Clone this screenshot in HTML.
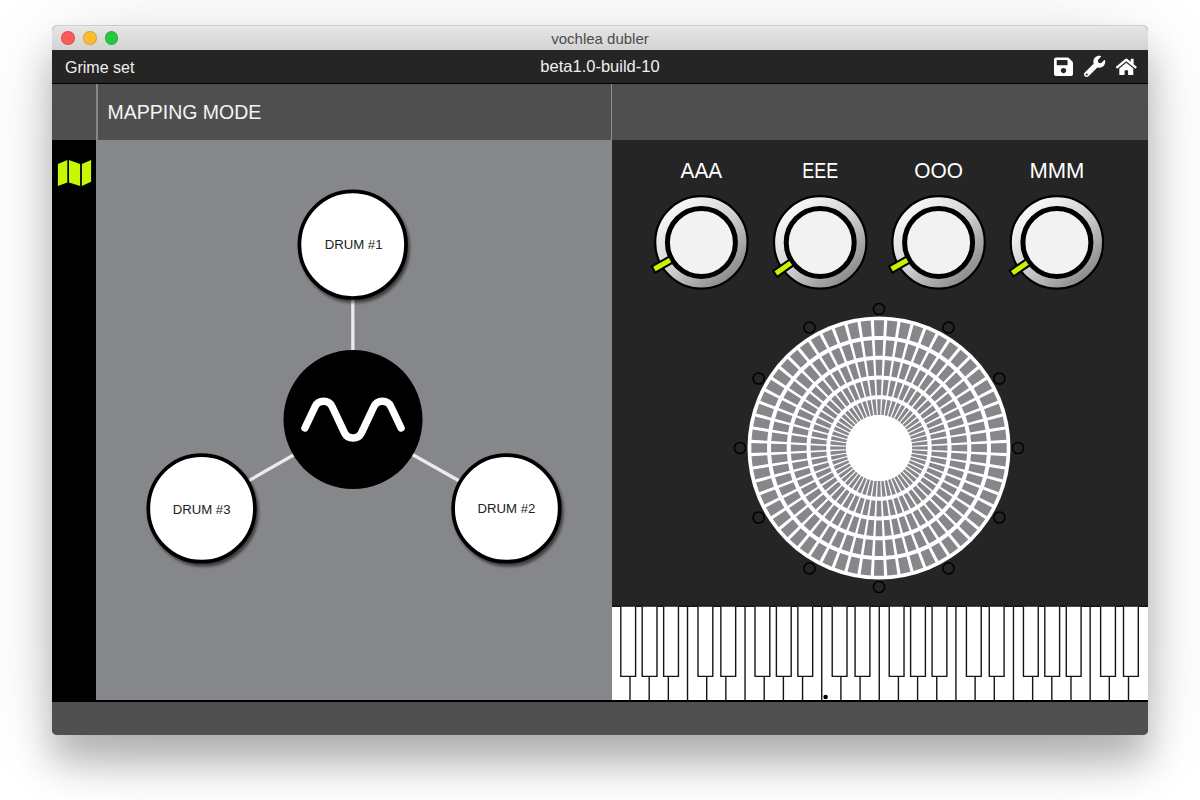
<!DOCTYPE html>
<html><head><meta charset="utf-8">
<style>
html,body{margin:0;padding:0;width:1200px;height:800px;overflow:hidden;background:#fff;font-family:"Liberation Sans",sans-serif;}
.abs{position:absolute;}
#win{position:absolute;left:52px;top:26px;width:1096px;height:709px;border-radius:5px;box-shadow:0 12px 80px -10px rgba(0,0,0,0.18),0 28px 36px rgba(0,0,0,0.24);background:#505050;}
#title{position:absolute;left:52px;top:26px;width:1096px;height:24px;border-radius:5px 5px 0 0;background:linear-gradient(#ececec,#e4e4e4 10%,#d3d3d3);box-shadow:0 -1px 0 rgba(0,0,0,0.16);}
#title span{position:absolute;left:0;right:0;top:4.1px;text-align:center;font-size:15px;color:#4c4c4c;}
.tl{position:absolute;top:31.4px;width:13.4px;height:13.4px;border-radius:50%;box-sizing:border-box;border:0.6px solid rgba(0,0,0,0.12);}
#tb{position:absolute;left:52px;top:50px;width:1096px;height:33px;background:#252525;border-bottom:1px solid #000;}
#tb .t1{position:absolute;left:13px;top:8.5px;font-size:16px;color:#f0f0f0;}
#tb .t2{position:absolute;left:0;right:0;top:6.8px;text-align:center;font-size:16.5px;color:#f0f0f0;}
#hdr{position:absolute;left:52px;top:84px;width:1096px;height:56px;background:#4f4f4f;}
#side{position:absolute;left:52px;top:140px;width:44px;height:560px;background:#000;}
#lp{position:absolute;left:96px;top:140px;width:516px;height:560px;background:#86878b;}
#rp{position:absolute;left:612px;top:140px;width:536px;height:560px;background:#252525;}
#bb{position:absolute;left:52px;top:700px;width:1096px;height:35px;background:#505050;border-top:2px solid #000;box-sizing:border-box;border-radius:0 0 5px 5px;}
.vd{position:absolute;width:1.8px;background:#86878b;}
#mm{position:absolute;left:107.5px;top:101.1px;font-size:19.5px;color:#f4f4f4;}
svg{position:absolute;left:0;top:0;}
.kl{font-family:"Liberation Sans",sans-serif;font-size:22px;fill:#fff;}
.dt{font-family:"Liberation Sans",sans-serif;font-size:13.2px;fill:#222;}
</style></head><body>
<div id="win"></div>
<div id="title"><span>vochlea dubler</span></div>
<div class="tl" style="left:61.4px;background:#fd5b57;"></div>
<div class="tl" style="left:83.2px;background:#fdbb2e;"></div>
<div class="tl" style="left:105px;background:#28c840;"></div>
<div id="tb"><div class="t1">Grime set</div><div class="t2">beta1.0-build-10</div></div>
<div id="hdr"></div>
<div class="vd" style="left:95.9px;top:84px;height:56px;"></div>
<div class="vd" style="left:611px;width:1px;top:84px;height:56px;background:#8e8e8e;"></div>
<div id="side"></div>
<div id="lp"></div>
<div id="rp"></div>
<div id="bb"></div>
<div id="mm">MAPPING MODE</div>
<svg width="1200" height="800" viewBox="0 0 1200 800">
<defs>
<linearGradient id="kg" x1="0.15" y1="0.1" x2="0.85" y2="0.9">
<stop offset="0" stop-color="#fbfbfb"/><stop offset="0.5" stop-color="#d0d0d2"/><stop offset="1" stop-color="#87878a"/>
</linearGradient>
<filter id="sh" x="-20%" y="-20%" width="150%" height="150%"><feGaussianBlur in="SourceAlpha" stdDeviation="1.6"/><feOffset dx="2" dy="2.5"/><feComponentTransfer><feFuncA type="linear" slope="0.55"/></feComponentTransfer><feMerge><feMergeNode/><feMergeNode in="SourceGraphic"/></feMerge></filter>
</defs>
<!-- map icon -->
<g fill="#c8f800">
<path d="M57.9,164 L67.3,160 L67.3,182.5 L57.9,186 Z"/>
<path d="M69,160 L80.1,164 L80.1,186 L69,182.5 Z"/>
<path d="M81.9,164 L91.1,160 L91.1,181.8 L81.9,186 Z"/>
</g>
<!-- toolbar icons -->
<g fill="#fff">
<path transform="translate(1054,56.1) scale(0.0424,0.0412)" d="M433.941 129.941l-83.882-83.882A48 48 0 0 0 316.118 32H48C21.49 32 0 53.49 0 80v352c0 26.51 21.49 48 48 48h352c26.51 0 48-21.49 48-48V163.882a48 48 0 0 0-14.059-33.941zM224 416c-35.346 0-64-28.654-64-64 0-35.346 28.654-64 64-64s64 28.654 64 64c0 35.346-28.654 64-64 64zm96-304.52V212c0 6.627-5.373 12-12 12H76c-6.627 0-12-5.373-12-12V108c0-6.627 5.373-12 12-12h228.52c3.183 0 6.235 1.264 8.485 3.515l3.48 3.48A11.996 11.996 0 0 1 320 111.48z" transform-origin="0 0"/>
<path transform="translate(1084,55.8) scale(0.0415)" d="M507.73 109.1c-2.24-9.03-13.54-12.09-20.12-5.51l-74.36 74.36-67.88-11.310-11.31-67.88 74.36-74.36c6.62-6.62 3.43-17.9-5.66-20.16-47.38-11.74-99.55.91-136.58 37.93-39.64 39.64-50.55 97.1-34.05 147.2L18.74 402.76c-24.99 24.99-24.99 65.51 0 90.5 24.99 24.99 65.51 24.99 90.5 0l213.21-213.21c50.12 16.71 107.47 5.68 147.37-34.22 37.07-37.07 49.7-89.32 37.91-136.73zM64 472c-13.25 0-24-10.75-24-24 0-13.26 10.75-24 24-24s24 10.74 24 24c0 13.25-10.75 24-24 24z"/>
<path transform="translate(1115.8,57.5) scale(0.0365)" d="M280.37 148.26L96 300.11V464a16 16 0 0 0 16 16l112.06-.29a16 16 0 0 0 15.92-16V368a16 16 0 0 1 16-16h64a16 16 0 0 1 16 16v95.64a16 16 0 0 0 16 16.05L464 480a16 16 0 0 0 16-16V300L295.67 148.26a12.19 12.19 0 0 0-15.3 0zM571.6 251.47L488 182.56V44.05a12 12 0 0 0-12-12h-56a12 12 0 0 0-12 12v72.61L318.47 43a48 48 0 0 0-61 0L4.340 251.47a12 12 0 0 0-1.6 16.9l25.5 31A12 12 0 0 0 45.15 301l235.22-193.74a12.19 12.19 0 0 1 15.3 0L530.9 301a12 12 0 0 0 16.9-1.6l25.5-31a12 12 0 0 0-1.7-16.93z"/>
</g>
<!-- drums -->
<g stroke="#ebebeb" stroke-width="3.3">
<line x1="353" y1="421" x2="352.7" y2="244.7"/>
<line x1="353" y1="421" x2="506.4" y2="507.5"/>
<line x1="353" y1="421" x2="201.6" y2="507.7"/>
</g>
<circle cx="353" cy="419.5" r="69.5" fill="#000"/>
<path d="M304.95,428.00 L315.01,406.74 A9.5,9.5 0 0 1 332.19,406.74 L344.41,432.56 A9.5,9.5 0 0 0 361.59,432.56 L373.81,406.74 A9.5,9.5 0 0 1 390.99,406.74 L401.05,428.00" fill="none" stroke="#fff" stroke-width="7.4" stroke-linecap="round" stroke-linejoin="round"/>
<g filter="url(#sh)">
<circle cx="352.7" cy="244.7" r="53.3" fill="#fff" stroke="#000" stroke-width="3.7"/>
<circle cx="506.4" cy="508.4" r="53.3" fill="#fff" stroke="#000" stroke-width="3.7"/>
<circle cx="201.6" cy="508.4" r="53.3" fill="#fff" stroke="#000" stroke-width="3.7"/>
</g>
<text class="dt" x="353.6" y="249.2" text-anchor="middle">DRUM #1</text>
<text class="dt" x="506.4" y="513.3" text-anchor="middle">DRUM #2</text>
<text class="dt" x="201.6" y="513.5" text-anchor="middle">DRUM #3</text>
<!-- knobs -->
<g>
<circle cx="701.4" cy="242.4" r="46.2" fill="url(#kg)" stroke="#000" stroke-width="2.2"/>
<circle cx="701.4" cy="242.4" r="34" fill="#f2f2f2" stroke="#000" stroke-width="5"/>
<line x1="670.94" y1="259.63" x2="652.66" y2="269.98" stroke="#000" stroke-width="9"/>
<line x1="670.07" y1="260.13" x2="654.4" y2="268.99" stroke="#c8f400" stroke-width="5"/>
</g>
<text transform="translate(701.4,177.8) scale(0.946,1)" x="0" y="0" text-anchor="middle" class="kl">AAA</text>
<g>
<circle cx="820.2" cy="242.4" r="46.2" fill="url(#kg)" stroke="#000" stroke-width="2.2"/>
<circle cx="820.2" cy="242.4" r="34" fill="#f2f2f2" stroke="#000" stroke-width="5"/>
<line x1="791.53" y1="262.48" x2="774.33" y2="274.52" stroke="#000" stroke-width="9"/>
<line x1="790.71" y1="263.05" x2="775.97" y2="273.37" stroke="#c8f400" stroke-width="5"/>
</g>
<text transform="translate(820.2,177.8) scale(0.815,1)" x="0" y="0" text-anchor="middle" class="kl">EEE</text>
<g>
<circle cx="938.6" cy="242.4" r="46.2" fill="url(#kg)" stroke="#000" stroke-width="2.2"/>
<circle cx="938.6" cy="242.4" r="34" fill="#f2f2f2" stroke="#000" stroke-width="5"/>
<line x1="908.14" y1="259.63" x2="889.86" y2="269.98" stroke="#000" stroke-width="9"/>
<line x1="907.27" y1="260.13" x2="891.6" y2="268.99" stroke="#c8f400" stroke-width="5"/>
</g>
<text transform="translate(938.6,177.8) scale(0.95,1)" x="0" y="0" text-anchor="middle" class="kl">OOO</text>
<g>
<circle cx="1056.9" cy="242.4" r="46.2" fill="url(#kg)" stroke="#000" stroke-width="2.2"/>
<circle cx="1056.9" cy="242.4" r="34" fill="#f2f2f2" stroke="#000" stroke-width="5"/>
<line x1="1028.06" y1="262.22" x2="1010.75" y2="274.12" stroke="#000" stroke-width="9"/>
<line x1="1027.23" y1="262.79" x2="1012.4" y2="272.99" stroke="#c8f400" stroke-width="5"/>
</g>
<text transform="translate(1056.9,177.8) scale(1.0,1)" x="0" y="0" text-anchor="middle" class="kl">MMM</text>
<!-- disc -->
<circle cx="879" cy="448" r="131.5" fill="#fff"/>
<path fill="#86878b" d="M877.8,415.02 L877.15,399.28 L880.85,399.28 L880.2,415.02ZM881.25,415.08 L882.26,399.36 L885.93,399.74 L883.64,415.33ZM884.68,415.49 L887.32,399.97 L890.93,400.73 L887.03,415.99ZM888.05,416.26 L892.3,401.1 L895.81,402.24 L890.33,417.01ZM891.32,417.38 L897.13,402.75 L900.5,404.25 L893.51,418.36ZM894.45,418.84 L901.76,404.89 L904.96,406.73 L896.53,420.04ZM897.41,420.61 L906.14,407.5 L909.13,409.67 L899.36,422.03ZM900.17,422.69 L910.22,410.56 L912.97,413.03 L901.96,424.3ZM902.7,425.04 L913.97,414.03 L916.44,416.78 L904.31,426.83ZM904.97,427.64 L917.33,417.87 L919.5,420.86 L906.39,429.59ZM906.96,430.47 L920.27,422.04 L922.11,425.24 L908.16,432.55ZM908.64,433.49 L922.75,426.5 L924.25,429.87 L909.62,435.68ZM909.99,436.67 L924.76,431.19 L925.9,434.7 L910.74,438.95ZM911.01,439.97 L926.27,436.07 L927.03,439.68 L911.51,442.32ZM911.67,443.36 L927.26,441.07 L927.64,444.74 L911.92,445.75ZM911.98,446.8 L927.72,446.15 L927.72,449.85 L911.98,449.2ZM911.92,450.25 L927.64,451.26 L927.26,454.93 L911.67,452.64ZM911.51,453.68 L927.03,456.32 L926.27,459.93 L911.01,456.03ZM910.74,457.05 L925.9,461.3 L924.76,464.81 L909.99,459.33ZM909.62,460.32 L924.25,466.13 L922.75,469.5 L908.64,462.51ZM908.16,463.45 L922.11,470.76 L920.27,473.96 L906.96,465.53ZM906.39,466.41 L919.5,475.14 L917.33,478.13 L904.97,468.36ZM904.31,469.17 L916.44,479.22 L913.97,481.97 L902.7,470.96ZM901.96,471.7 L912.97,482.97 L910.22,485.44 L900.17,473.31ZM899.36,473.97 L909.13,486.33 L906.14,488.5 L897.41,475.39ZM896.53,475.96 L904.96,489.27 L901.76,491.11 L894.45,477.16ZM893.51,477.64 L900.5,491.75 L897.13,493.25 L891.32,478.62ZM890.33,478.99 L895.81,493.76 L892.3,494.9 L888.05,479.74ZM887.03,480.01 L890.93,495.27 L887.32,496.03 L884.68,480.51ZM883.64,480.67 L885.93,496.26 L882.26,496.64 L881.25,480.92ZM880.2,480.98 L880.85,496.72 L877.15,496.72 L877.8,480.98ZM876.75,480.92 L875.74,496.64 L872.07,496.26 L874.36,480.67ZM873.32,480.51 L870.68,496.03 L867.07,495.27 L870.97,480.01ZM869.95,479.74 L865.7,494.9 L862.19,493.76 L867.67,478.99ZM866.68,478.62 L860.87,493.25 L857.5,491.75 L864.49,477.64ZM863.55,477.16 L856.24,491.11 L853.04,489.27 L861.47,475.96ZM860.59,475.39 L851.86,488.5 L848.87,486.33 L858.64,473.97ZM857.83,473.31 L847.78,485.44 L845.03,482.97 L856.04,471.7ZM855.3,470.96 L844.03,481.97 L841.56,479.22 L853.69,469.17ZM853.03,468.36 L840.67,478.13 L838.5,475.14 L851.61,466.41ZM851.04,465.53 L837.73,473.96 L835.89,470.76 L849.84,463.45ZM849.36,462.51 L835.25,469.5 L833.75,466.13 L848.38,460.32ZM848.01,459.33 L833.24,464.81 L832.1,461.3 L847.26,457.05ZM846.99,456.03 L831.73,459.93 L830.97,456.32 L846.49,453.68ZM846.33,452.64 L830.74,454.93 L830.36,451.26 L846.08,450.25ZM846.02,449.2 L830.28,449.85 L830.28,446.15 L846.02,446.8ZM846.08,445.75 L830.36,444.74 L830.74,441.07 L846.33,443.36ZM846.49,442.32 L830.97,439.68 L831.73,436.07 L846.99,439.97ZM847.26,438.95 L832.1,434.7 L833.24,431.19 L848.01,436.67ZM848.38,435.68 L833.75,429.87 L835.25,426.5 L849.36,433.49ZM849.84,432.55 L835.89,425.24 L837.73,422.04 L851.04,430.47ZM851.61,429.59 L838.5,420.86 L840.67,417.87 L853.03,427.64ZM853.69,426.83 L841.56,416.78 L844.03,414.03 L855.3,425.04ZM856.04,424.3 L845.03,413.03 L847.78,410.56 L857.83,422.69ZM858.64,422.03 L848.87,409.67 L851.86,407.5 L860.59,420.61ZM861.47,420.04 L853.04,406.73 L856.24,404.89 L863.55,418.84ZM864.49,418.36 L857.5,404.25 L860.87,402.75 L866.68,417.38ZM867.67,417.01 L862.19,402.24 L865.7,401.1 L869.95,416.26ZM870.97,415.99 L867.07,400.73 L870.68,399.97 L873.32,415.49ZM874.36,415.33 L872.07,399.74 L875.74,399.36 L876.75,415.08ZM876.99,395.29 L876.34,379.55 L881.66,379.55 L881.01,395.29ZM882.51,395.37 L883.51,379.65 L888.8,380.2 L886.51,395.79ZM887.99,396.02 L890.63,380.5 L895.83,381.6 L891.93,396.86ZM893.38,397.25 L897.63,382.08 L902.68,383.72 L897.2,398.49ZM898.6,399.03 L904.41,384.39 L909.27,386.55 L902.28,400.66ZM903.62,401.35 L910.92,387.39 L915.52,390.05 L907.1,403.36ZM908.36,404.17 L917.09,391.06 L921.38,394.18 L911.61,406.54ZM912.78,407.48 L922.83,395.36 L926.77,398.91 L915.76,410.17ZM916.83,411.24 L928.09,400.23 L931.64,404.17 L919.52,414.22ZM920.46,415.39 L932.82,405.62 L935.94,409.91 L922.83,418.64ZM923.64,419.9 L936.95,411.48 L939.61,416.08 L925.65,423.38ZM926.34,424.72 L940.45,417.73 L942.61,422.59 L927.97,428.4ZM928.51,429.8 L943.28,424.32 L944.92,429.37 L929.75,433.62ZM930.14,435.07 L945.4,431.17 L946.5,436.37 L930.98,439.01ZM931.21,440.49 L946.8,438.2 L947.35,443.49 L931.63,444.49ZM931.71,445.99 L947.45,445.34 L947.45,450.66 L931.71,450.01ZM931.63,451.51 L947.35,452.51 L946.8,457.8 L931.21,455.51ZM930.98,456.99 L946.5,459.63 L945.4,464.83 L930.14,460.93ZM929.75,462.38 L944.92,466.63 L943.28,471.68 L928.51,466.2ZM927.97,467.6 L942.61,473.41 L940.45,478.27 L926.34,471.28ZM925.65,472.62 L939.61,479.92 L936.95,484.52 L923.64,476.1ZM922.83,477.36 L935.94,486.09 L932.82,490.38 L920.46,480.61ZM919.52,481.78 L931.64,491.83 L928.09,495.77 L916.83,484.76ZM915.76,485.83 L926.77,497.09 L922.83,500.64 L912.78,488.52ZM911.61,489.46 L921.38,501.82 L917.09,504.94 L908.36,491.83ZM907.1,492.64 L915.52,505.95 L910.92,508.61 L903.62,494.65ZM902.28,495.34 L909.27,509.45 L904.41,511.61 L898.6,496.97ZM897.2,497.51 L902.68,512.28 L897.63,513.92 L893.38,498.75ZM891.93,499.14 L895.83,514.4 L890.63,515.5 L887.99,499.98ZM886.51,500.21 L888.8,515.8 L883.51,516.35 L882.51,500.63ZM881.01,500.71 L881.66,516.45 L876.34,516.45 L876.99,500.71ZM875.49,500.63 L874.49,516.35 L869.2,515.8 L871.49,500.21ZM870.01,499.98 L867.37,515.5 L862.17,514.4 L866.07,499.14ZM864.62,498.75 L860.37,513.92 L855.32,512.28 L860.8,497.51ZM859.4,496.97 L853.59,511.61 L848.73,509.45 L855.72,495.34ZM854.38,494.65 L847.08,508.61 L842.48,505.95 L850.9,492.64ZM849.64,491.83 L840.91,504.94 L836.62,501.82 L846.39,489.46ZM845.22,488.52 L835.17,500.64 L831.23,497.09 L842.24,485.83ZM841.17,484.76 L829.91,495.77 L826.36,491.83 L838.48,481.78ZM837.54,480.61 L825.18,490.38 L822.06,486.09 L835.17,477.36ZM834.36,476.1 L821.05,484.52 L818.39,479.92 L832.35,472.62ZM831.66,471.28 L817.55,478.27 L815.39,473.41 L830.03,467.6ZM829.49,466.2 L814.72,471.68 L813.08,466.63 L828.25,462.38ZM827.86,460.93 L812.6,464.83 L811.5,459.63 L827.02,456.99ZM826.79,455.51 L811.2,457.8 L810.65,452.51 L826.37,451.51ZM826.29,450.01 L810.55,450.66 L810.55,445.34 L826.29,445.99ZM826.37,444.49 L810.65,443.49 L811.2,438.2 L826.79,440.49ZM827.02,439.01 L811.5,436.37 L812.6,431.17 L827.86,435.07ZM828.25,433.62 L813.08,429.37 L814.72,424.32 L829.49,429.8ZM830.03,428.4 L815.39,422.59 L817.55,417.73 L831.66,424.72ZM832.35,423.38 L818.39,416.08 L821.05,411.48 L834.36,419.9ZM835.17,418.64 L822.06,409.91 L825.18,405.62 L837.54,415.39ZM838.48,414.22 L826.36,404.17 L829.91,400.23 L841.17,411.24ZM842.24,410.17 L831.23,398.91 L835.17,395.36 L845.22,407.48ZM846.39,406.54 L836.62,394.18 L840.91,391.06 L849.64,404.17ZM850.9,403.36 L842.48,390.05 L847.08,387.39 L854.38,401.35ZM855.72,400.66 L848.73,386.55 L853.59,384.39 L859.4,399.03ZM860.8,398.49 L855.32,383.72 L860.37,382.08 L864.62,397.25ZM866.07,396.86 L862.17,381.6 L867.37,380.5 L870.01,396.02ZM871.49,395.79 L869.2,380.2 L874.49,379.65 L875.49,395.37ZM876.18,375.55 L875.54,359.82 L882.46,359.82 L881.82,375.55ZM883.77,375.66 L884.77,359.94 L891.66,360.66 L889.38,376.25ZM891.3,376.55 L893.95,361.02 L900.72,362.47 L896.82,377.72ZM898.71,378.23 L902.96,363.06 L909.54,365.2 L904.07,379.97ZM905.89,380.67 L911.7,366.03 L918.03,368.85 L911.04,382.96ZM912.78,383.85 L920.09,369.9 L926.09,373.36 L917.66,386.67ZM919.3,387.73 L928.03,374.62 L933.63,378.7 L923.86,391.05ZM925.38,392.28 L935.43,380.15 L940.58,384.79 L929.57,396.05ZM930.95,397.43 L942.21,386.42 L946.85,391.57 L934.72,401.62ZM935.95,403.14 L948.3,393.37 L952.38,398.97 L939.27,407.7ZM940.33,409.34 L953.64,400.91 L957.1,406.91 L943.15,414.22ZM944.04,415.96 L958.15,408.97 L960.97,415.3 L946.33,421.11ZM947.03,422.93 L961.8,417.46 L963.94,424.04 L948.77,428.29ZM949.28,430.18 L964.53,426.28 L965.98,433.05 L950.45,435.7ZM950.75,437.62 L966.34,435.34 L967.06,442.23 L951.34,443.23ZM951.45,445.18 L967.18,444.54 L967.18,451.46 L951.45,450.82ZM951.34,452.77 L967.06,453.77 L966.34,460.66 L950.75,458.38ZM950.45,460.3 L965.98,462.95 L964.53,469.72 L949.28,465.82ZM948.77,467.71 L963.94,471.96 L961.8,478.54 L947.03,473.07ZM946.33,474.89 L960.97,480.7 L958.15,487.03 L944.04,480.04ZM943.15,481.78 L957.1,489.09 L953.64,495.09 L940.33,486.66ZM939.27,488.3 L952.38,497.03 L948.3,502.63 L935.95,492.86ZM934.72,494.38 L946.85,504.43 L942.21,509.58 L930.95,498.57ZM929.57,499.95 L940.58,511.21 L935.43,515.85 L925.38,503.72ZM923.86,504.95 L933.63,517.3 L928.03,521.38 L919.3,508.27ZM917.66,509.33 L926.09,522.64 L920.09,526.1 L912.78,512.15ZM911.04,513.04 L918.03,527.15 L911.7,529.97 L905.89,515.33ZM904.07,516.03 L909.54,530.8 L902.96,532.94 L898.71,517.77ZM896.82,518.28 L900.72,533.53 L893.95,534.98 L891.3,519.45ZM889.38,519.75 L891.66,535.34 L884.77,536.06 L883.77,520.34ZM881.82,520.45 L882.46,536.18 L875.54,536.18 L876.18,520.45ZM874.23,520.34 L873.23,536.06 L866.34,535.34 L868.62,519.75ZM866.7,519.45 L864.05,534.98 L857.28,533.53 L861.18,518.28ZM859.29,517.77 L855.04,532.94 L848.46,530.8 L853.93,516.03ZM852.11,515.33 L846.3,529.97 L839.97,527.15 L846.96,513.04ZM845.22,512.15 L837.91,526.1 L831.91,522.64 L840.34,509.33ZM838.7,508.27 L829.97,521.38 L824.37,517.3 L834.14,504.95ZM832.62,503.72 L822.57,515.85 L817.42,511.21 L828.43,499.95ZM827.05,498.57 L815.79,509.58 L811.15,504.43 L823.28,494.38ZM822.05,492.86 L809.7,502.63 L805.62,497.03 L818.73,488.3ZM817.67,486.66 L804.36,495.09 L800.9,489.09 L814.85,481.78ZM813.96,480.04 L799.85,487.03 L797.03,480.7 L811.67,474.89ZM810.97,473.07 L796.2,478.54 L794.06,471.96 L809.23,467.71ZM808.72,465.82 L793.47,469.72 L792.02,462.95 L807.55,460.3ZM807.25,458.38 L791.66,460.66 L790.94,453.77 L806.66,452.77ZM806.55,450.82 L790.82,451.46 L790.82,444.54 L806.55,445.18ZM806.66,443.23 L790.94,442.23 L791.66,435.34 L807.25,437.62ZM807.55,435.7 L792.02,433.05 L793.47,426.28 L808.72,430.18ZM809.23,428.29 L794.06,424.04 L796.2,417.46 L810.97,422.93ZM811.67,421.11 L797.03,415.3 L799.85,408.97 L813.96,415.96ZM814.85,414.22 L800.9,406.91 L804.36,400.91 L817.67,409.34ZM818.73,407.7 L805.62,398.97 L809.7,393.37 L822.05,403.14ZM823.28,401.62 L811.15,391.57 L815.79,386.42 L827.05,397.43ZM828.43,396.05 L817.42,384.79 L822.57,380.15 L832.62,392.28ZM834.14,391.05 L824.37,378.7 L829.97,374.62 L838.7,387.73ZM840.34,386.67 L831.91,373.36 L837.91,369.9 L845.22,383.85ZM846.96,382.96 L839.97,368.85 L846.3,366.03 L852.11,380.67ZM853.93,379.97 L848.46,365.2 L855.04,363.06 L859.29,378.23ZM861.18,377.72 L857.28,362.47 L864.05,361.02 L866.7,376.55ZM868.62,376.25 L866.34,360.66 L873.23,359.94 L874.23,375.66ZM875.37,355.82 L874.73,340.08 L883.27,340.08 L882.63,355.82ZM885.03,355.95 L886.03,340.23 L894.53,341.12 L892.24,356.71ZM894.62,357.08 L897.26,341.55 L905.62,343.33 L901.71,358.59ZM904.03,359.21 L908.28,344.05 L916.41,346.69 L910.93,361.45ZM913.18,362.32 L918.99,347.68 L926.8,351.15 L919.81,365.27ZM921.95,366.36 L929.26,352.41 L936.66,356.68 L928.23,369.98ZM930.25,371.29 L938.97,358.18 L945.89,363.21 L936.12,375.56ZM937.98,377.07 L948.03,364.94 L954.38,370.66 L943.38,381.93ZM945.07,383.62 L956.34,372.62 L962.06,378.97 L949.93,389.02ZM951.44,390.88 L963.79,381.11 L968.82,388.03 L955.71,396.75ZM957.02,398.77 L970.32,390.34 L974.59,397.74 L960.64,405.05ZM961.73,407.19 L975.85,400.2 L979.32,408.01 L964.68,413.82ZM965.55,416.07 L980.31,410.59 L982.95,418.72 L967.79,422.97ZM968.41,425.29 L983.67,421.38 L985.45,429.74 L969.92,432.38ZM970.29,434.76 L985.88,432.47 L986.77,440.97 L971.05,441.97ZM971.18,444.37 L986.92,443.73 L986.92,452.27 L971.18,451.63ZM971.05,454.03 L986.77,455.03 L985.88,463.53 L970.29,461.24ZM969.92,463.62 L985.45,466.26 L983.67,474.62 L968.41,470.71ZM967.79,473.03 L982.95,477.28 L980.31,485.41 L965.55,479.93ZM964.68,482.18 L979.32,487.99 L975.85,495.8 L961.73,488.81ZM960.64,490.95 L974.59,498.26 L970.32,505.66 L957.02,497.23ZM955.71,499.25 L968.82,507.97 L963.79,514.89 L951.44,505.12ZM949.93,506.98 L962.06,517.03 L956.34,523.38 L945.07,512.38ZM943.38,514.07 L954.38,525.34 L948.03,531.06 L937.98,518.93ZM936.12,520.44 L945.89,532.79 L938.97,537.82 L930.25,524.71ZM928.23,526.02 L936.66,539.32 L929.26,543.59 L921.95,529.64ZM919.81,530.73 L926.8,544.85 L918.99,548.32 L913.18,533.68ZM910.93,534.55 L916.41,549.31 L908.28,551.95 L904.03,536.79ZM901.71,537.41 L905.62,552.67 L897.26,554.45 L894.62,538.92ZM892.24,539.29 L894.53,554.88 L886.03,555.77 L885.03,540.05ZM882.63,540.18 L883.27,555.92 L874.73,555.92 L875.37,540.18ZM872.97,540.05 L871.97,555.77 L863.47,554.88 L865.76,539.29ZM863.38,538.92 L860.74,554.45 L852.38,552.67 L856.29,537.41ZM853.97,536.79 L849.72,551.95 L841.59,549.31 L847.07,534.55ZM844.82,533.68 L839.01,548.32 L831.2,544.85 L838.19,530.73ZM836.05,529.64 L828.74,543.59 L821.34,539.32 L829.77,526.02ZM827.75,524.71 L819.03,537.82 L812.11,532.79 L821.88,520.44ZM820.02,518.93 L809.97,531.06 L803.62,525.34 L814.62,514.07ZM812.93,512.38 L801.66,523.38 L795.94,517.03 L808.07,506.98ZM806.56,505.12 L794.21,514.89 L789.18,507.97 L802.29,499.25ZM800.98,497.23 L787.68,505.66 L783.41,498.26 L797.36,490.95ZM796.27,488.81 L782.15,495.8 L778.68,487.99 L793.32,482.18ZM792.45,479.93 L777.69,485.41 L775.05,477.28 L790.21,473.03ZM789.59,470.71 L774.33,474.62 L772.55,466.26 L788.08,463.62ZM787.71,461.24 L772.12,463.53 L771.23,455.03 L786.95,454.03ZM786.82,451.63 L771.08,452.27 L771.08,443.73 L786.82,444.37ZM786.95,441.97 L771.23,440.97 L772.12,432.47 L787.71,434.76ZM788.08,432.38 L772.55,429.74 L774.33,421.38 L789.59,425.29ZM790.21,422.97 L775.05,418.72 L777.69,410.59 L792.45,416.07ZM793.32,413.82 L778.68,408.01 L782.15,400.2 L796.27,407.19ZM797.36,405.05 L783.41,397.74 L787.68,390.34 L800.98,398.77ZM802.29,396.75 L789.18,388.03 L794.21,381.11 L806.56,390.88ZM808.07,389.02 L795.94,378.97 L801.66,372.62 L812.93,383.62ZM814.62,381.93 L803.62,370.66 L809.97,364.94 L820.02,377.07ZM821.88,375.56 L812.11,363.21 L819.03,358.18 L827.75,371.29ZM829.77,369.98 L821.34,356.68 L828.74,352.41 L836.05,366.36ZM838.19,365.27 L831.2,351.15 L839.01,347.68 L844.82,362.32ZM847.07,361.45 L841.59,346.69 L849.72,344.05 L853.97,359.21ZM856.29,358.59 L852.38,343.33 L860.74,341.55 L863.38,357.08ZM865.76,356.71 L863.47,341.12 L871.97,340.23 L872.97,355.95ZM874.56,336.09 L873.92,320.35 L884.08,320.35 L883.44,336.09ZM886.29,336.24 L887.29,320.52 L897.4,321.58 L895.11,337.16ZM897.93,337.61 L900.57,322.08 L910.51,324.2 L906.61,339.46ZM909.36,340.19 L913.61,325.03 L923.28,328.17 L917.8,342.94ZM920.47,343.96 L926.28,329.32 L935.56,333.45 L928.57,347.57ZM931.11,348.86 L938.42,334.91 L947.22,339.99 L938.8,353.3ZM941.19,354.85 L949.92,341.74 L958.14,347.72 L948.37,360.07ZM950.59,361.86 L960.64,349.74 L968.19,356.54 L957.18,367.8ZM959.2,369.82 L970.46,358.81 L977.26,366.36 L965.14,376.41ZM966.93,378.63 L979.28,368.86 L985.26,377.08 L972.15,385.81ZM973.7,388.2 L987.01,379.78 L992.09,388.58 L978.14,395.89ZM979.43,398.43 L993.55,391.44 L997.68,400.72 L983.04,406.53ZM984.06,409.2 L998.83,403.72 L1001.97,413.39 L986.81,417.64ZM987.54,420.39 L1002.8,416.49 L1004.92,426.43 L989.39,429.07ZM989.84,431.89 L1005.42,429.6 L1006.48,439.71 L990.76,440.71ZM990.91,443.56 L1006.65,442.92 L1006.65,453.08 L990.91,452.44ZM990.76,455.29 L1006.48,456.29 L1005.42,466.4 L989.84,464.11ZM989.39,466.93 L1004.92,469.57 L1002.8,479.51 L987.54,475.61ZM986.81,478.36 L1001.97,482.61 L998.83,492.28 L984.06,486.8ZM983.04,489.47 L997.68,495.28 L993.55,504.56 L979.43,497.57ZM978.14,500.11 L992.09,507.42 L987.01,516.22 L973.7,507.8ZM972.15,510.19 L985.26,518.92 L979.28,527.14 L966.93,517.37ZM965.14,519.59 L977.26,529.64 L970.46,537.19 L959.2,526.18ZM957.18,528.2 L968.19,539.46 L960.64,546.26 L950.59,534.14ZM948.37,535.93 L958.14,548.28 L949.92,554.26 L941.19,541.15ZM938.8,542.7 L947.22,556.01 L938.42,561.09 L931.11,547.14ZM928.57,548.43 L935.56,562.55 L926.28,566.68 L920.47,552.04ZM917.8,553.06 L923.28,567.83 L913.61,570.97 L909.36,555.81ZM906.61,556.54 L910.51,571.8 L900.57,573.92 L897.93,558.39ZM895.11,558.84 L897.4,574.42 L887.29,575.48 L886.29,559.76ZM883.44,559.91 L884.08,575.65 L873.92,575.65 L874.56,559.91ZM871.71,559.76 L870.71,575.48 L860.6,574.42 L862.89,558.84ZM860.07,558.39 L857.43,573.92 L847.49,571.8 L851.39,556.54ZM848.64,555.81 L844.39,570.97 L834.72,567.83 L840.2,553.06ZM837.53,552.04 L831.72,566.68 L822.44,562.55 L829.43,548.43ZM826.89,547.14 L819.58,561.09 L810.78,556.01 L819.2,542.7ZM816.81,541.15 L808.08,554.26 L799.86,548.28 L809.63,535.93ZM807.41,534.14 L797.36,546.26 L789.81,539.46 L800.82,528.2ZM798.8,526.18 L787.54,537.19 L780.74,529.64 L792.86,519.59ZM791.07,517.37 L778.72,527.14 L772.74,518.92 L785.85,510.19ZM784.3,507.8 L770.99,516.22 L765.91,507.42 L779.86,500.11ZM778.57,497.57 L764.45,504.56 L760.32,495.28 L774.96,489.47ZM773.94,486.8 L759.17,492.28 L756.03,482.61 L771.19,478.36ZM770.46,475.61 L755.2,479.51 L753.08,469.57 L768.61,466.93ZM768.16,464.11 L752.58,466.4 L751.52,456.29 L767.24,455.29ZM767.09,452.44 L751.35,453.08 L751.35,442.92 L767.09,443.56ZM767.24,440.71 L751.52,439.71 L752.58,429.6 L768.16,431.89ZM768.61,429.07 L753.08,426.43 L755.2,416.49 L770.46,420.39ZM771.19,417.64 L756.03,413.39 L759.17,403.72 L773.94,409.2ZM774.96,406.53 L760.32,400.72 L764.45,391.44 L778.57,398.43ZM779.86,395.89 L765.91,388.58 L770.99,379.78 L784.3,388.2ZM785.85,385.81 L772.74,377.08 L778.72,368.86 L791.07,378.63ZM792.86,376.41 L780.74,366.36 L787.54,358.81 L798.8,369.82ZM800.82,367.8 L789.81,356.54 L797.36,349.74 L807.41,361.86ZM809.63,360.07 L799.86,347.72 L808.08,341.74 L816.81,354.85ZM819.2,353.3 L810.78,339.99 L819.58,334.91 L826.89,348.86ZM829.43,347.57 L822.44,333.45 L831.72,329.32 L837.53,343.96ZM840.2,342.94 L834.72,328.17 L844.39,325.03 L848.64,340.19ZM851.39,339.46 L847.49,324.2 L857.43,322.08 L860.07,337.61ZM862.89,337.16 L860.6,321.58 L870.71,320.52 L871.71,336.24Z"/>
<circle cx="879" cy="448" r="33" fill="#fff"/>
<g fill="none" stroke="#000" stroke-width="1.5"><circle cx="879" cy="309" r="5.6"/><circle cx="948.5" cy="327.62" r="5.6"/><circle cx="999.38" cy="378.5" r="5.6"/><circle cx="1018" cy="448" r="5.6"/><circle cx="999.38" cy="517.5" r="5.6"/><circle cx="948.5" cy="568.38" r="5.6"/><circle cx="879" cy="587" r="5.6"/><circle cx="809.5" cy="568.38" r="5.6"/><circle cx="758.62" cy="517.5" r="5.6"/><circle cx="740" cy="448" r="5.6"/><circle cx="758.62" cy="378.5" r="5.6"/><circle cx="809.5" cy="327.62" r="5.6"/></g>
<!-- piano -->
<rect x="612" y="606.7" width="536" height="93.3" fill="#fff"/><rect x="612" y="605.8" width="536" height="1" fill="#000"/>
<g stroke="#141414" stroke-width="1.4"><line x1="630" y1="606.7" x2="630" y2="700"/><line x1="649.18" y1="606.7" x2="649.18" y2="700"/><line x1="668.35" y1="606.7" x2="668.35" y2="700"/><line x1="687.52" y1="606.7" x2="687.52" y2="700"/><line x1="706.7" y1="606.7" x2="706.7" y2="700"/><line x1="725.87" y1="606.7" x2="725.87" y2="700"/><line x1="745.04" y1="606.7" x2="745.04" y2="700"/><line x1="764.21" y1="606.7" x2="764.21" y2="700"/><line x1="783.39" y1="606.7" x2="783.39" y2="700"/><line x1="802.56" y1="606.7" x2="802.56" y2="700"/><line x1="821.73" y1="606.7" x2="821.73" y2="700"/><line x1="840.91" y1="606.7" x2="840.91" y2="700"/><line x1="860.08" y1="606.7" x2="860.08" y2="700"/><line x1="879.25" y1="606.7" x2="879.25" y2="700"/><line x1="898.42" y1="606.7" x2="898.42" y2="700"/><line x1="917.6" y1="606.7" x2="917.6" y2="700"/><line x1="936.77" y1="606.7" x2="936.77" y2="700"/><line x1="955.94" y1="606.7" x2="955.94" y2="700"/><line x1="975.12" y1="606.7" x2="975.12" y2="700"/><line x1="994.29" y1="606.7" x2="994.29" y2="700"/><line x1="1013.46" y1="606.7" x2="1013.46" y2="700"/><line x1="1032.64" y1="606.7" x2="1032.64" y2="700"/><line x1="1051.81" y1="606.7" x2="1051.81" y2="700"/><line x1="1070.98" y1="606.7" x2="1070.98" y2="700"/><line x1="1090.15" y1="606.7" x2="1090.15" y2="700"/><line x1="1109.33" y1="606.7" x2="1109.33" y2="700"/><line x1="1128.5" y1="606.7" x2="1128.5" y2="700"/></g>
<g fill="#fff" stroke="#141414" stroke-width="1.4" stroke-linejoin="round"><path d="M620.8,606.7 V676.4 H635.6 V606.7"/><path d="M642.18,606.7 V676.4 H656.98 V606.7"/><path d="M663.65,606.7 V676.4 H678.45 V606.7"/><path d="M698,606.7 V676.4 H712.8 V606.7"/><path d="M720.87,606.7 V676.4 H735.67 V606.7"/><path d="M755.01,606.7 V676.4 H769.81 V606.7"/><path d="M776.39,606.7 V676.4 H791.19 V606.7"/><path d="M797.86,606.7 V676.4 H812.66 V606.7"/><path d="M832.21,606.7 V676.4 H847.01 V606.7"/><path d="M855.08,606.7 V676.4 H869.88 V606.7"/><path d="M889.23,606.7 V676.4 H904.02 V606.7"/><path d="M910.6,606.7 V676.4 H925.4 V606.7"/><path d="M932.07,606.7 V676.4 H946.87 V606.7"/><path d="M966.42,606.7 V676.4 H981.22 V606.7"/><path d="M989.29,606.7 V676.4 H1004.09 V606.7"/><path d="M1023.44,606.7 V676.4 H1038.24 V606.7"/><path d="M1044.81,606.7 V676.4 H1059.61 V606.7"/><path d="M1066.28,606.7 V676.4 H1081.08 V606.7"/><path d="M1100.63,606.7 V676.4 H1115.43 V606.7"/><path d="M1123.5,606.7 V676.4 H1138.3 V606.7"/></g>
<circle cx="825.6" cy="697" r="2.3" fill="#000"/>
</svg>
</body></html>
